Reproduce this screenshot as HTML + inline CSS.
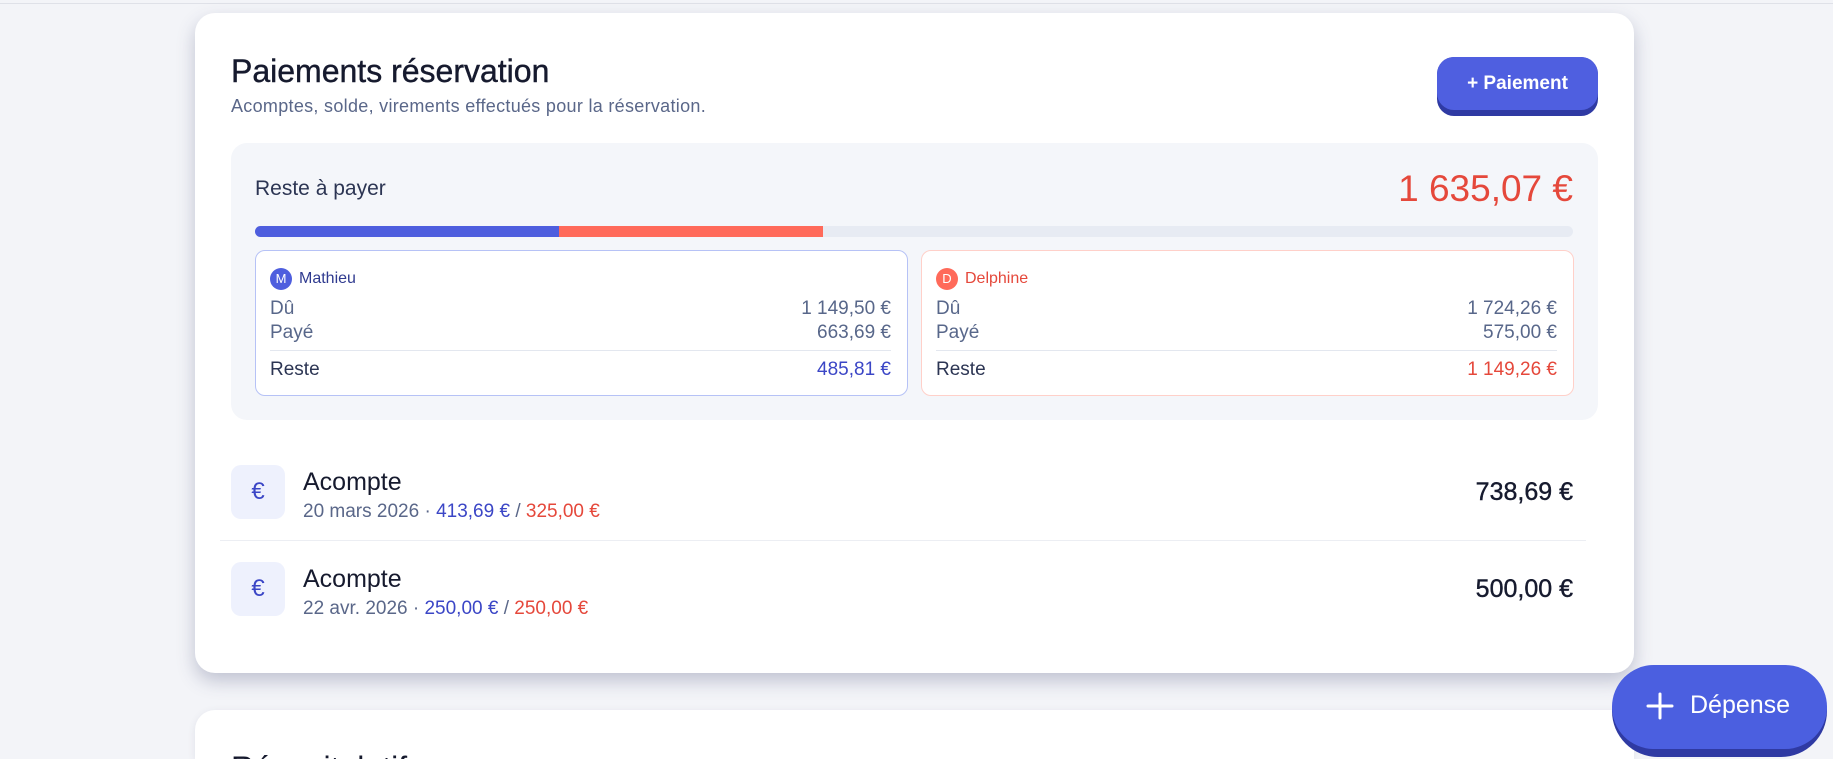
<!DOCTYPE html>
<html><head><meta charset="utf-8"><style>
*{box-sizing:border-box;margin:0;padding:0}
html,body{width:1833px;height:759px;overflow:hidden}
body{background:#f3f4f8;font-family:"Liberation Sans",sans-serif;position:relative}
.top{position:absolute;left:0;top:0;width:1833px;height:4px;border-bottom:1px solid #dfe1e8;background:#f3f4f8}
.card{position:absolute;left:195px;top:13px;width:1439px;height:660px;background:#fff;border-radius:20px;box-shadow:0 8px 18px rgba(60,70,110,.28)}
.card2{position:absolute;left:195px;top:710px;width:1439px;height:49px;overflow:hidden;background:#fff;border-radius:20px 20px 0 0;box-shadow:0 2px 8px rgba(60,70,110,.1)}
.abs{position:absolute;white-space:nowrap}
h1{position:absolute;left:36px;top:40px;font-size:32px;font-weight:normal;color:#161a2e;-webkit-text-stroke:.4px #161a2e}
.sub{left:36px;top:83px;font-size:18px;letter-spacing:.3px;color:#5a6789}
.btn{position:absolute;left:1242px;top:44px;width:161px;height:59px;border-radius:17px;background:#2f3aa3}
.btn div{height:53px;border-radius:17px;background:#4f5fe0;color:#fff;font-weight:bold;font-size:19px;text-align:center;line-height:53px}
.sum{position:absolute;left:36px;top:130px;width:1367px;height:277px;background:#f4f6fa;border-radius:16px}
.bar{position:absolute;left:24px;top:83px;width:1318px;height:11px;border-radius:6px;background:#e7ebf3;overflow:hidden}
.pc{position:absolute;top:107px;width:653px;height:146px;background:#fff;border-radius:10px}
.row{position:absolute;left:14px;right:16px;font-size:19px;color:#58678a}
.row span{position:absolute;right:0}
.av{position:absolute;left:14px;top:17px;width:22px;height:22px;border-radius:50%;color:#fff;font-size:13px;text-align:center;line-height:22px}
.ic{position:absolute;left:36px;width:54px;height:54px;border-radius:10px;background:#eef1fd;color:#3b46c6;font-size:24px;text-align:center;line-height:54px}
.t{font-size:25px;color:#161a2e;left:108px}
.s{font-size:19px;color:#5a6789;left:108px}
.amt{font-size:25px;color:#161a2e;right:61px;-webkit-text-stroke:.4px #161a2e}
.b{color:#3b46c6}.r{color:#e5483b}
.fab{position:absolute;left:1612px;top:665px;width:215px;height:92px;border-radius:46px;background:#2f3aa3}
.fab div{height:84px;border-radius:42px;background:#4b5fe0;color:#fff;font-size:25px;line-height:80px;padding-left:78px;position:relative}
</style></head><body>
<div class="top"></div>
<div class="card">
<h1>Paiements réservation</h1>
<div class="abs sub">Acomptes, solde, virements effectués pour la réservation.</div>
<div class="btn"><div>+ Paiement</div></div>
<div class="sum">
<div class="abs" style="left:24px;top:34px;font-size:21px;color:#2c3553">Reste à payer</div>
<div class="abs" style="right:25px;top:25px;font-size:37px;color:#e5483b">1 635,07 €</div>
<div class="bar"><div style="position:absolute;left:0;top:0;width:304px;height:11px;background:#4e5ede"></div><div style="position:absolute;left:304px;top:0;width:264px;height:11px;background:#ff6a5a"></div></div>
<div class="pc" style="left:24px;border:1px solid #b6c2f6">
<div class="av" style="background:#4e5ede">M</div>
<div class="abs" style="left:43px;top:19px;font-size:16px;color:#2f3a8f">Mathieu</div>
<div class="row" style="top:47px">Dû<span>1 149,50 €</span></div>
<div class="row" style="top:71px">Payé<span>663,69 €</span></div>
<div style="position:absolute;left:14px;right:16px;top:99px;border-top:1px solid #e3e7ef"></div>
<div class="row" style="top:108px;color:#2c3553">Reste<span class="b">485,81 €</span></div>
</div>
<div class="pc" style="left:690px;border:1px solid #ffd0c9">
<div class="av" style="background:#ff6a5a">D</div>
<div class="abs" style="left:43px;top:19px;font-size:16px;color:#e5483b">Delphine</div>
<div class="row" style="top:47px">Dû<span>1 724,26 €</span></div>
<div class="row" style="top:71px">Payé<span>575,00 €</span></div>
<div style="position:absolute;left:14px;right:16px;top:99px;border-top:1px solid #e3e7ef"></div>
<div class="row" style="top:108px;color:#2c3553">Reste<span class="r">1 149,26 €</span></div>
</div>
</div>
<div class="ic" style="top:452px">€</div>
<div class="abs t" style="top:455px">Acompte</div>
<div class="abs s" style="top:488px">20 mars 2026 · <span class="b">413,69 €</span> / <span class="r">325,00 €</span></div>
<div class="abs amt" style="top:465px">738,69 €</div>
<div style="position:absolute;left:25px;width:1366px;top:527px;border-top:1px solid #eceef3"></div>
<div class="ic" style="top:549px">€</div>
<div class="abs t" style="top:552px">Acompte</div>
<div class="abs s" style="top:585px">22 avr. 2026 · <span class="b">250,00 €</span> / <span class="r">250,00 €</span></div>
<div class="abs amt" style="top:562px">500,00 €</div>
</div>
<div class="card2"><div class="abs" style="left:36px;top:40px;font-size:32px;color:#161a2e">Récapitulatif</div></div>
<div class="fab"><div><svg style="position:absolute;left:34px;top:27px" width="28" height="28" viewBox="0 0 28 28"><path d="M14 2V26M2 14H26" stroke="#fff" stroke-width="3" stroke-linecap="round"/></svg>Dépense</div></div>
</body></html>
